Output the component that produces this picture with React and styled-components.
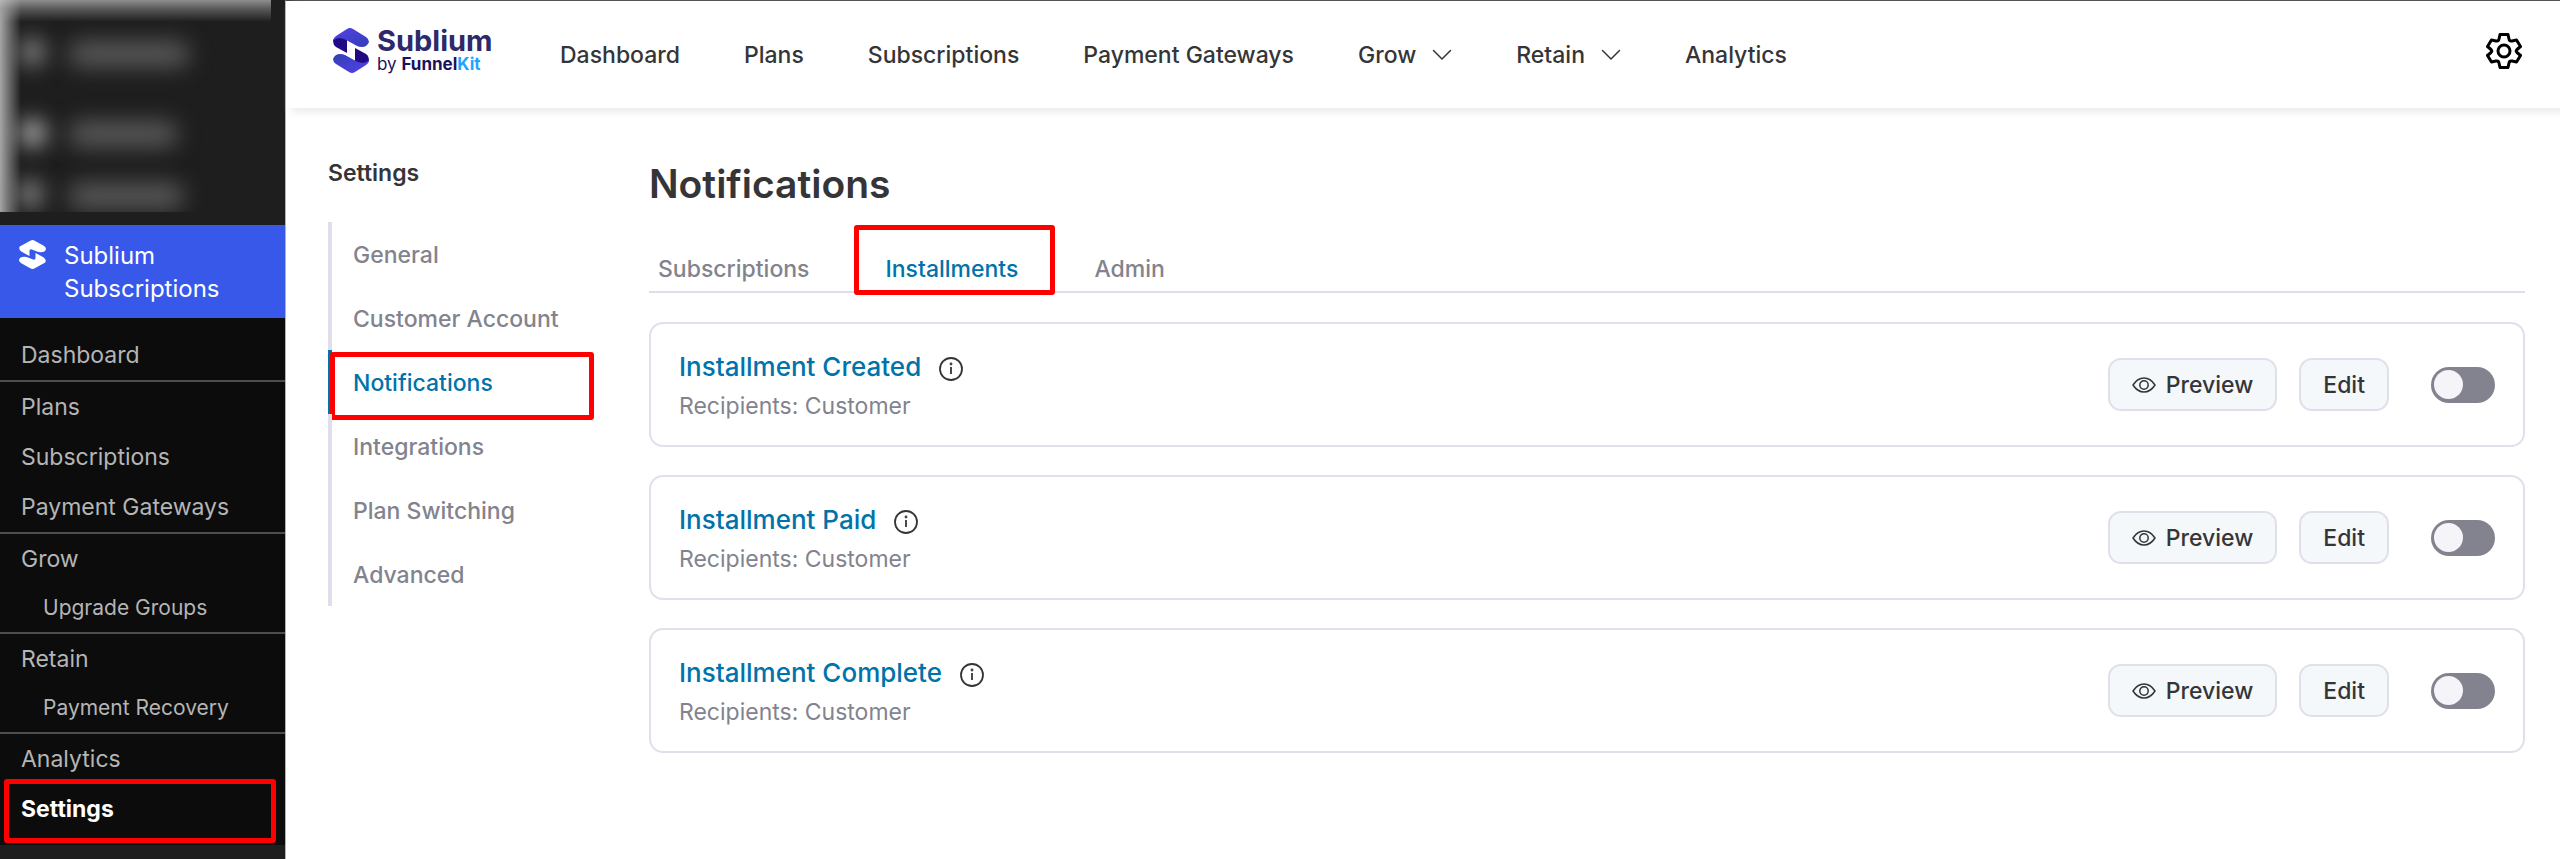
import React from 'react'
import styled, { createGlobalStyle, css } from 'styled-components'

const GlobalStyle = createGlobalStyle`
    * {
        box-sizing: border-box;
    }

    body {
        margin: 0;
        background: #fff;
        color: #353537;
        font-family: Inter, 'Liberation Sans', sans-serif;
        font-size: 23px;
    }

    a {
        color: inherit;
        text-decoration: none;
    }
`

const Shell = styled.div`
    display: flex;
    min-height: 100vh;
`

/* red frame drawn over an item */
const Frame = styled.span`
    position: absolute;
    inset: ${props => props.$inset};
    border: 5px solid #fe0000;
    border-radius: 3px;
    pointer-events: none;
`

/* admin menu */
const AdminMenu = styled.aside`
    flex: none;
    width: 285px;
    background: #1e1e1e;
`

const Obscured = styled.div`
    position: relative;
    width: 271px;
    height: 212px;
    margin-bottom: 13px;
    overflow: hidden;
    background:
        linear-gradient(to bottom, rgba(190, 190, 190, 0.7), rgba(160, 160, 160, 0.45) 9px, rgba(120, 120, 120, 0) 22px),
        linear-gradient(to right, rgba(200, 200, 200, 0.8), rgba(150, 150, 150, 0.75) 7px, rgba(120, 120, 120, 0) 21px);
`

const Smudge = styled.span`
    position: absolute;
    left: ${props => props.$x}px;
    top: ${props => props.$y}px;
    width: ${props => props.$w}px;
    height: 26px;
    border-radius: 13px;
    background: ${props => props.$color};
    filter: blur(11px);
`

const PluginLink = styled.a`
    display: flex;
    gap: 18px;
    height: 93px;
    padding: 14px 19px;
    background: #3858e9;
    color: #fff;
    font-size: 24px;
    line-height: 33px;

    svg {
        margin-top: 1px;
    }
`

const Submenu = styled.nav`
    padding: 12px 0 11px;
    background: #0c0c0c;
    color: #b5b5b5;
`

const SubmenuLink = styled.a`
    display: block;
    position: relative;
    padding-left: 21px;
    line-height: 50px;

    ${props => props.$nested && css`
        padding-left: 43px;
        font-size: 21px;
        line-height: 48px;
    `}

    ${props => props.$divider && css`
        border-bottom: 2px solid #4a4d51;
    `}

    ${props => props.$active && css`
        color: #fff;
        font-weight: 700;
    `}
`

/* plugin screen */
const Screen = styled.div`
    flex: 1;
    border-top: 1px solid #3c3a3c;
    border-left: 1px solid #b4b4b4;
`

const Header = styled.header`
    display: flex;
    align-items: center;
    height: 107px;
    padding: 0 38px 8px 47px;
    box-shadow: 6px 4px 8px #e9ebee;
`

const Brand = styled.a`
    display: flex;
    align-items: center;
    gap: 8px;
    width: 227px;
`

const BrandName = styled.span`
    display: block;
    color: #2d2a6c;
    font-size: 29px;
    font-weight: 700;
    line-height: 26px;
`

const BrandBy = styled.span`
    display: block;
    color: #17135c;
    font-size: 17px;
    line-height: 20px;

    b {
        font-weight: 700;
    }

    em {
        color: #1ea5ff;
        font-style: normal;
    }
`

const TopNav = styled.nav`
    display: flex;
    flex: 1;
    gap: 64px;
    padding-top: 8px;
    font-weight: 500;

    a {
        display: flex;
        align-items: center;
        gap: 16px;
    }
`

const IconButton = styled.button`
    display: flex;
    padding: 0;
    border: 0;
    background: none;
    color: ${props => props.$color || '#353537'};
`

const Body = styled.div`
    display: grid;
    grid-template-columns: 266px 1fr;
    gap: 55px;
    padding: 44px 35px 0 42px;
`

const SideTitle = styled.h2`
    margin: 6px 0 34px;
    font-size: 23px;
    font-weight: 600;
    line-height: 30px;
`

const SideLink = styled.a`
    display: block;
    position: relative;
    padding: 2px 0 0 21px;
    border-left: 4px solid ${props => (props.$active ? '#0073aa' : '#dedfea')};
    color: ${props => (props.$active ? '#0073aa' : '#82838e')};
    font-weight: 500;
    line-height: 62px;
`

const Title = styled.h1`
    margin: 0;
    font-size: 39px;
    font-weight: 600;
    line-height: 64px;
`

const Tabs = styled.nav`
    display: flex;
    gap: 58px;
    margin: 21px 0 29px;
    border-bottom: 2px solid #dedfea;
`

const Tab = styled.a`
    position: relative;
    padding: 10px 9px 0;
    color: ${props => (props.$active ? '#0073aa' : '#82838e')};
    font-weight: 500;
    line-height: 44px;
`

const Cards = styled.ul`
    display: grid;
    gap: 28px;
    margin: 0;
    padding: 0;
    list-style: none;
`

const Card = styled.li`
    display: flex;
    align-items: center;
    gap: 22px;
    height: 125px;
    padding: 0 28px;
    border: 2px solid #e0e0ec;
    border-radius: 14px;
`

const CardText = styled.div`
    flex: 1;
    padding-top: 3px;
`

const CardTitle = styled.h3`
    display: flex;
    align-items: center;
    gap: 18px;
    margin: 0;
    color: #0073aa;
    font-size: 26px;
    font-weight: 500;
    line-height: 40px;

    button {
        padding-top: 4px;
    }
`

const Recipients = styled.p`
    margin: 0;
    color: #82838e;
    line-height: 38px;
`

const Button = styled.button`
    display: flex;
    align-items: center;
    gap: 10px;
    height: 53px;
    padding: 0 22px;
    border: 2px solid #e0e0ea;
    border-radius: 13px;
    background: #f4f8fb;
    color: #353537;
    font: inherit;
    font-weight: 500;
`

const Toggle = styled.input`
    appearance: none;
    display: flex;
    align-items: center;
    width: 64px;
    height: 36px;
    margin: 0 0 0 20px;
    padding: 0 3px;
    border-radius: 18px;
    background: #82838e;

    &::before {
        content: '';
        width: 29px;
        height: 29px;
        border-radius: 50%;
        background: #f4f4f9;
    }

    &:checked {
        justify-content: flex-end;
        background: #0073aa;
    }
`

const MarkIcon = () => (
    <svg width="27" height="29" viewBox="0 0 36 45" preserveAspectRatio="none" fill="#fff" aria-hidden="true">
        <path d="M15 1 Q18 -1 21 1 L33 9 Q36 11 36 14 Q35 19 29 19 Q26 19 24 18 L18 15 Q14 13 14 17 L14 25 L3 18 Q-1 14 1 10 Z" />
        <path d="M21 44 Q18 46 15 44 L3 36 Q0 34 0 31 Q1 26 7 26 Q10 26 12 27 L18 30 Q22 32 22 28 L22 20 L33 27 Q37 31 35 35 Z" />
    </svg>
)

const LogoIcon = () => (
    <svg width="36" height="45" viewBox="0 0 36 45" aria-hidden="true">
        <defs>
            <linearGradient id="logo-top" x1="0" y1="0" x2="1" y2="1">
                <stop offset="0" stopColor="#5540ea" />
                <stop offset="1" stopColor="#3240b4" />
            </linearGradient>
            <linearGradient id="logo-bottom" x1="0" y1="0" x2="1" y2="1">
                <stop offset="0" stopColor="#3240b4" />
                <stop offset="1" stopColor="#5540ea" />
            </linearGradient>
        </defs>
        <path fill="#220a84" d="M0 12 Q3 8 8 8 L14 11 L14 25 L3 19 Q0 17 0 12 Z" />
        <path fill="#220a84" d="M36 33 Q33 37 28 37 L22 34 L22 20 L33 26 Q36 28 36 33 Z" />
        <path fill="url(#logo-top)" d="M0 13 Q0 10 3 8 L14 1 Q17 -1 20 1 L33 9 Q36 11 36 14 Q34 19 29 19 Q26 19 24 18 L15 13 Q5 7 0 13 Z" />
        <path fill="url(#logo-bottom)" d="M36 32 Q36 35 33 37 L22 44 Q19 46 16 44 L3 36 Q0 34 0 31 Q2 26 7 26 Q10 26 12 27 L21 32 Q31 38 36 32 Z" />
    </svg>
)

const GearIcon = () => (
    <svg width="36" height="38" viewBox="0 0 36 38" fill="none" stroke="currentColor" strokeWidth="3" strokeLinejoin="round">
        <path d="M14 2.500 H22 L23 7 Q23.500 9.500 26 9 L30.500 8 L34.500 14.500 L31 17.500 Q29.500 19 31 20.500 L34.500 23.500 L30.500 30 L26 29 Q23.500 28.500 23 31 L22 35.500 H14 L13 31 Q12.500 28.500 10 29 L5.500 30 L1.500 23.500 L5 20.500 Q6.500 19 5 17.500 L1.500 14.500 L5.500 8 L10 9 Q12.500 9.500 13 7 Z" />
        <circle cx="18" cy="19" r="6" />
    </svg>
)

const ChevronIcon = () => (
    <svg width="20" height="12" viewBox="0 0 20 12" fill="none" stroke="currentColor" strokeWidth="1.500" strokeLinecap="round" aria-hidden="true">
        <path d="M1.500 1.500 L10 10 L18.500 1.500" />
    </svg>
)

const InfoIcon = () => (
    <svg width="24" height="24" viewBox="0 0 24 24" fill="none" stroke="currentColor" strokeWidth="1.800">
        <circle cx="12" cy="12" r="11" />
        <path d="M12 10 V17" />
        <circle cx="12" cy="7" r="0.500" fill="currentColor" />
    </svg>
)

const EyeIcon = () => (
    <svg width="24" height="16" viewBox="0 0 24 16" fill="none" stroke="currentColor" strokeWidth="1.500" strokeLinejoin="round" aria-hidden="true">
        <path d="M1 8 Q5.500 1 12 1 Q18.500 1 23 8 Q18.500 15 12 15 Q5.500 15 1 8 Z" />
        <circle cx="12" cy="8" r="4.200" />
    </svg>
)

const submenu = [
    { label: 'Dashboard', divider: true },
    { label: 'Plans' },
    { label: 'Subscriptions' },
    { label: 'Payment Gateways', divider: true },
    { label: 'Grow' },
    { label: 'Upgrade Groups', nested: true, divider: true },
    { label: 'Retain' },
    { label: 'Payment Recovery', nested: true, divider: true },
    { label: 'Analytics' },
    { label: 'Settings', active: true }
]

const topNav = [
    { label: 'Dashboard' },
    { label: 'Plans' },
    { label: 'Subscriptions' },
    { label: 'Payment Gateways' },
    { label: 'Grow', menu: true },
    { label: 'Retain', menu: true },
    { label: 'Analytics' }
]

const sections = ['General', 'Customer Account', 'Notifications', 'Integrations', 'Plan Switching', 'Advanced']
const tabs = ['Subscriptions', 'Installments', 'Admin']
const notifications = ['Installment Created', 'Installment Paid', 'Installment Complete']

const NotificationCard = ({ name }) => (
    <Card>
        <CardText>
            <CardTitle>
                <a href="#edit">{name}</a>
                <IconButton type="button" aria-label={`About ${name}`}>
                    <InfoIcon />
                </IconButton>
            </CardTitle>
            <Recipients>Recipients: Customer</Recipients>
        </CardText>
        <Button type="button">
            <EyeIcon />
            Preview
        </Button>
        <Button type="button">Edit</Button>
        <Toggle type="checkbox" role="switch" aria-label={`Enable ${name}`} />
    </Card>
)

const App = () => (
    <Shell>
        <GlobalStyle />
        <AdminMenu>
            <Obscured aria-hidden="true">
                <Smudge $x={19} $y={39} $w={26} $color="#908e8f" />
                <Smudge $x={68} $y={41} $w={122} $color="#585858" />
                <Smudge $x={19} $y={120} $w={27} $color="#bababa" />
                <Smudge $x={68} $y={121} $w={110} $color="#585858" />
                <Smudge $x={17} $y={181} $w={26} $color="#908e8f" />
                <Smudge $x={68} $y={183} $w={116} $color="#585858" />
            </Obscured>
            <PluginLink href="#sublium">
                <MarkIcon />
                <span>
                    Sublium
                    <br />
                    Subscriptions
                </span>
            </PluginLink>
            <Submenu aria-label="Sublium Subscriptions">
                {submenu.map(item => (
                    <SubmenuLink
                        key={item.label}
                        href="#menu"
                        $nested={item.nested}
                        $divider={item.divider}
                        $active={item.active}
                    >
                        {item.label}
                        {item.active && <Frame $inset="-5px 9px -9px 4px" />}
                    </SubmenuLink>
                ))}
            </Submenu>
        </AdminMenu>
        <Screen>
            <Header>
                <Brand href="#home">
                    <LogoIcon />
                    <span>
                        <BrandName>Sublium</BrandName>
                        <BrandBy>
                            by <b>Funnel<em>Kit</em></b>
                        </BrandBy>
                    </span>
                </Brand>
                <TopNav>
                    {topNav.map(item => (
                        <a key={item.label} href="#nav">
                            {item.label}
                            {item.menu && <ChevronIcon />}
                        </a>
                    ))}
                </TopNav>
                <IconButton type="button" aria-label="Settings" $color="#000">
                    <GearIcon />
                </IconButton>
            </Header>
            <Body>
                <div>
                    <SideTitle>Settings</SideTitle>
                    <nav>
                        {sections.map(name => (
                            <SideLink key={name} href="#section" $active={name === 'Notifications'}>
                                {name}
                                {name === 'Notifications' && <Frame $inset="2px 0 -6px -2px" />}
                            </SideLink>
                        ))}
                    </nav>
                </div>
                <main>
                    <Title>Notifications</Title>
                    <Tabs>
                        {tabs.map(name => (
                            <Tab key={name} href="#tab" $active={name === 'Installments'}>
                                {name}
                                {name === 'Installments' && <Frame $inset="-12px -28px -4px -23px" />}
                            </Tab>
                        ))}
                    </Tabs>
                    <Cards>
                        {notifications.map(name => (
                            <NotificationCard key={name} name={name} />
                        ))}
                    </Cards>
                </main>
            </Body>
        </Screen>
    </Shell>
)

export default App
